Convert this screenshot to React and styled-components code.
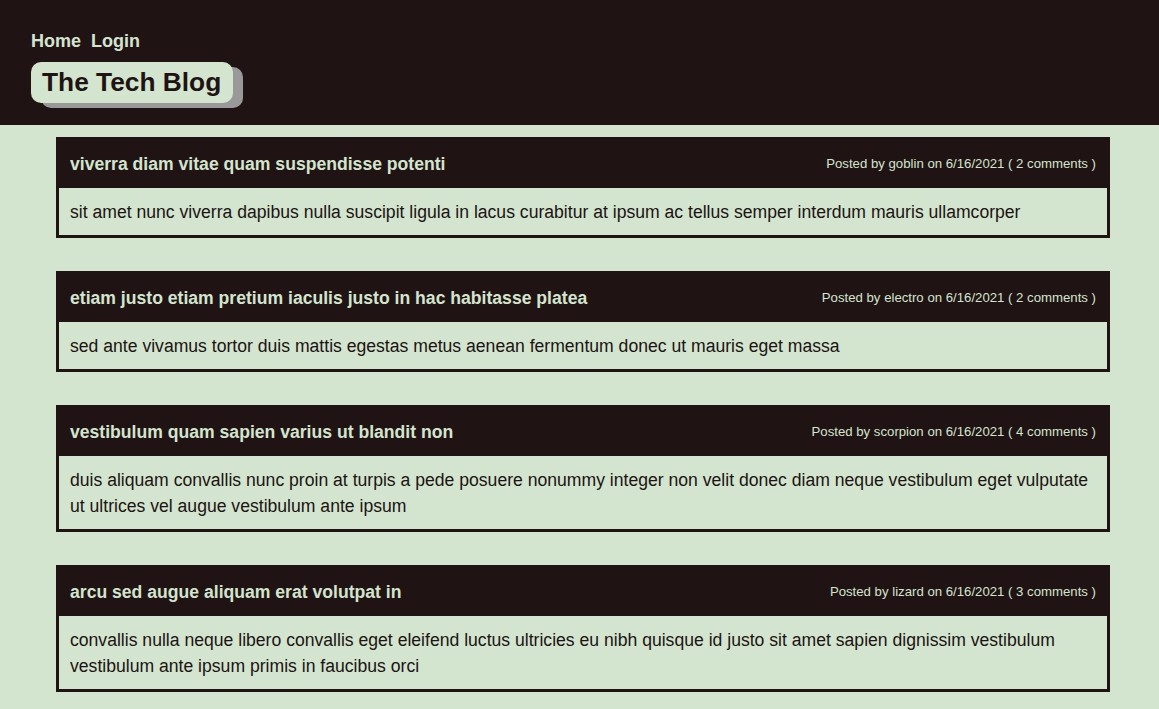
import React from "react";
import styled, { createGlobalStyle } from "styled-components";

const DARK = "#201313";
const LIGHT = "#d3e5cf";

const Global = createGlobalStyle`
  html, body { margin: 0; padding: 0; background: ${LIGHT}; }
  body { font-family: "Liberation Sans", Arial, sans-serif; }
`;

const Header = styled.header`
  background: ${DARK};
  height: 125px;
  box-sizing: border-box;
  padding: 30px 31px 0;
  display: flex;
  flex-direction: column;
  align-items: flex-start;
`;

const Nav = styled.nav`
  display: flex;
  gap: 10px;
`;

const NavLink = styled.a`
  color: ${LIGHT};
  font-size: 18px;
  font-weight: bold;
  text-decoration: none;
  line-height: 22px;
`;

const Title = styled.h1`
  margin: 10px 0 0;
  background: ${LIGHT};
  color: ${DARK};
  font-size: 26.3px;
  font-weight: bold;
  line-height: 41px;
  padding: 0 12px 0 11px;
  border-radius: 10px;
  box-shadow: 10px 5px 0 #999999;
`;

const Main = styled.main`
  padding: 12px 49px 20px 56px;
  display: flex;
  flex-direction: column;
  gap: 33px;
`;

const Card = styled.article`
  border: 3px solid ${DARK};
`;

const CardHead = styled.div`
  background: ${DARK};
  color: ${LIGHT};
  display: flex;
  justify-content: space-between;
  align-items: center;
  height: 48px;
  padding: 0 11px;
`;

const CardTitle = styled.h2`
  margin: 0;
  font-size: 17.6px;
  font-weight: bold;
`;

const Meta = styled.span`
  font-size: 13.2px;
  line-height: 14px;
  margin-top: -1px;
`;

const CardBody = styled.p`
  margin: 0;
  padding: 11px 11px 10px;
  font-size: 17.6px;
  line-height: 26px;
  color: ${DARK};
`;

const posts = [
  {
    title: "viverra diam vitae quam suspendisse potenti",
    user: "goblin",
    comments: 2,
    body: "sit amet nunc viverra dapibus nulla suscipit ligula in lacus curabitur at ipsum ac tellus semper interdum mauris ullamcorper",
  },
  {
    title: "etiam justo etiam pretium iaculis justo in hac habitasse platea",
    user: "electro",
    comments: 2,
    body: "sed ante vivamus tortor duis mattis egestas metus aenean fermentum donec ut mauris eget massa",
  },
  {
    title: "vestibulum quam sapien varius ut blandit non",
    user: "scorpion",
    comments: 4,
    body: "duis aliquam convallis nunc proin at turpis a pede posuere nonummy integer non velit donec diam neque vestibulum eget vulputate ut ultrices vel augue vestibulum ante ipsum",
  },
  {
    title: "arcu sed augue aliquam erat volutpat in",
    user: "lizard",
    comments: 3,
    body: "convallis nulla neque libero convallis eget eleifend luctus ultricies eu nibh quisque id justo sit amet sapien dignissim vestibulum vestibulum ante ipsum primis in faucibus orci",
  },
];

export default function App() {
  return (
    <>
      <Global />
      <Header>
        <Nav>
          <NavLink href="#">Home</NavLink>
          <NavLink href="#">Login</NavLink>
        </Nav>
        <Title>The Tech Blog</Title>
      </Header>
      <Main>
        {posts.map((p) => (
          <Card key={p.title}>
            <CardHead>
              <CardTitle>{p.title}</CardTitle>
              <Meta>
                Posted by {p.user} on 6/16/2021 ( {p.comments} comments )
              </Meta>
            </CardHead>
            <CardBody>{p.body}</CardBody>
          </Card>
        ))}
      </Main>
    </>
  );
}
